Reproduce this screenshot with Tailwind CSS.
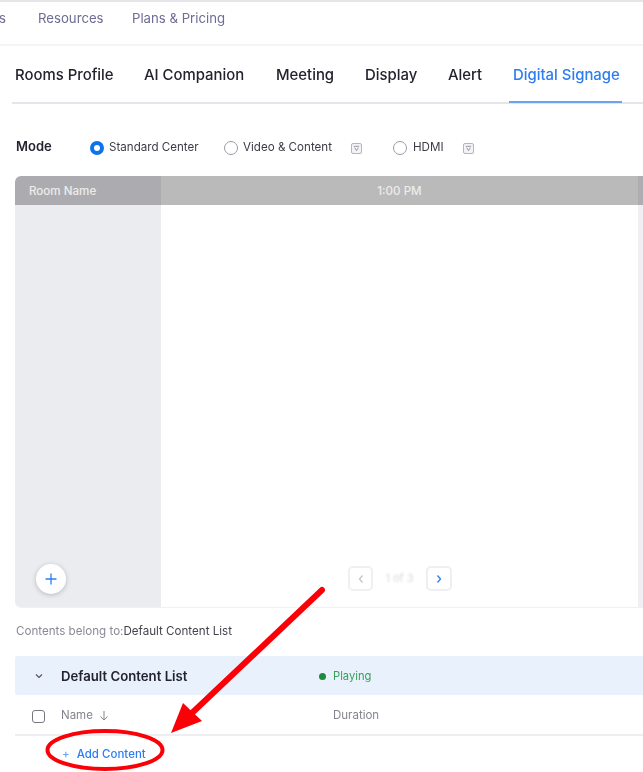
<!DOCTYPE html>
<html lang="en">
<head>
  <meta charset="UTF-8" />
  <title>Digital Signage</title>
  <script src="https://cdn.jsdelivr.net/npm/@tailwindcss/browser@4"></script>
</head>
<body class="bg-white font-['Inter',sans-serif] text-[#23232f]">
  <div class="relative w-[643px] h-[772px] overflow-hidden">
    <div class="blur-[0.5px]">
      <!-- top nav -->
      <div class="h-[46px] border-t-2 border-b-2 border-t-[#e6e6e9] border-b-[#f5f5f6] flex items-center text-[13.2px] text-[#6e6c92] pb-[8px]">
        <span class="w-[39px] -ml-[1px]">s</span>
        <span class="w-[94px]">Resources</span>
        <span>Plans &amp; Pricing</span>
      </div>

      <!-- tabs -->
      <div class="ml-[12px] h-[58px] border-b-2 border-[#e4e6ec] flex items-center text-[14.9px] font-medium pl-[3px] pt-[3px]">
        <span class="w-[129px]">Rooms Profile</span>
        <span class="w-[132px]">AI Companion</span>
        <span class="w-[89px]">Meeting</span>
        <span class="w-[83px]">Display</span>
        <span class="w-[65px]">Alert</span>
        <span class="relative text-[#2d7df0]">Digital Signage
          <span class="absolute left-[-4px] w-[113px] top-[37px] h-[2px] bg-[#6ba3f2]"></span>
        </span>
      </div>

      <!-- mode -->
      <div class="flex items-center h-[72px] pl-[16px] pt-[16px] text-[11.6px] text-[#3c3c48]">
        <span class="w-[74px] text-[13px] font-semibold text-[#23232f] -mt-[3px]">Mode</span>
        <span class="w-[14px] h-[14px] rounded-full border-[4px] border-[#0e72ed] mr-[5px]"></span>
        <span class="w-[115px]">Standard Center</span>
        <span class="w-[14px] h-[14px] rounded-full border-[1.5px] border-[#9a9aa6] mr-[5px]"></span>
        <span class="w-[108px]">Video &amp; Content</span>
        <span class="w-[11px] h-[11px] rounded-[2px] border border-[#b4b4bc] bg-[#f3f3f5] flex items-center justify-center mr-[31px]">
          <svg class="w-[7px] h-[7px]" viewBox="0 0 8 8" fill="none" stroke="#8e8e99" stroke-width="1"><path d="M1 1.5h6M2 3l2 3.5L6 3"/></svg>
        </span>
        <span class="w-[14px] h-[14px] rounded-full border-[1.5px] border-[#9a9aa6] mr-[6px]"></span>
        <span class="w-[50px]">HDMI</span>
        <span class="w-[11px] h-[11px] rounded-[2px] border border-[#b4b4bc] bg-[#f3f3f5] flex items-center justify-center">
          <svg class="w-[7px] h-[7px]" viewBox="0 0 8 8" fill="none" stroke="#8e8e99" stroke-width="1"><path d="M1 1.5h6M2 3l2 3.5L6 3"/></svg>
        </span>
      </div>

      <!-- schedule preview -->
      <div class="ml-[15px] h-[432px] flex flex-col rounded-tl-[6px] rounded-bl-[6px] overflow-hidden border-b border-[#f1f1f4]">
        <div class="h-[29px] shrink-0 flex bg-[#bababa] text-[11.6px] text-[#ececec] font-medium">
          <div class="w-[146px] bg-[#acacb0] pl-[14px] pt-[2px] flex items-center">Room Name</div>
          <div class="w-[477px] pt-[2px] flex items-center justify-center">1:00 PM</div>
          <div class="flex-1 bg-[#aeaeb2]"></div>
        </div>
        <div class="flex-1 flex">
          <div class="w-[146px] bg-[#ebecf0] flex items-end pl-[21px] pb-[13px]">
            <div class="w-[30px] h-[30px] rounded-full bg-white shadow-[0_1px_5px_rgba(0,0,0,0.22)] flex items-center justify-center">
              <svg class="w-[12px] h-[12px]" viewBox="0 0 12 12" stroke="#2d7df0" stroke-width="1.3" stroke-linecap="round"><path d="M6 1v10M1 6h10"/></svg>
            </div>
          </div>
          <div class="w-[477px] flex items-end pb-[16px] pl-[187px] gap-[12px]">
            <div class="w-[25px] h-[25px] rounded-[5px] border-2 border-[#f0f0f4] flex items-center justify-center">
              <svg class="w-[8px] h-[10px]" viewBox="0 0 8 10" fill="none" stroke="#c4c4ca" stroke-width="1.3"><path d="M5.5 1.5 2.5 5l3 3.5"/></svg>
            </div>
            <span class="w-[29px] h-[25px] flex items-center justify-center text-[11px] text-[#d9d9dd] blur-[1px] whitespace-nowrap">1 of 3</span>
            <div class="w-[26px] h-[25px] rounded-[5px] border-2 border-[#eeeef3] flex items-center justify-center">
              <svg class="w-[8px] h-[10px]" viewBox="0 0 8 10" fill="none" stroke="#2d7df0" stroke-width="1.3"><path d="M2.5 1.5 5.5 5l-3 3.5"/></svg>
            </div>
          </div>
          <div class="flex-1 bg-[#f0f0f4]"></div>
        </div>
      </div>

      <!-- content list -->
      <div class="pl-[16px] h-[48px] flex items-center text-[11.6px] text-[#8a8a96]">
        Contents belong to:<span class="text-[#44444f]">Default Content List</span>
      </div>
      <div class="ml-[15px] h-[39px] bg-[#e9f2fc] flex items-center rounded-l-[2px]">
        <svg class="w-[8px] h-[6px] ml-[20px] mr-[18px]" viewBox="0 0 8 6" fill="none" stroke="#55555f" stroke-width="1.2"><path d="M1 1.5 4 4.5l3-3"/></svg>
        <span class="w-[258px] pt-[2px] text-[13.2px] font-semibold text-[#23232f]">Default Content List</span>
        <span class="w-[7px] h-[7px] rounded-full bg-[#1f8a3f] mr-[7px] mt-[2px]"></span>
        <span class="pt-[2px] text-[11.2px] text-[#37a05a]">Playing</span>
      </div>
      <div class="ml-[15px] h-[41px] border-b-2 border-[#eeeef2] flex items-center pt-[3px] text-[11.5px] text-[#85858f]">
        <span class="w-[13px] h-[13px] rounded-[3px] border border-[#77777f] ml-[17px] mr-[16px]"></span>
        <span class="w-[38px]">Name</span>
        <svg class="w-[10px] h-[11px] -mt-[1px]" viewBox="0 0 10 11" fill="none" stroke="#85858f" stroke-width="1"><path d="M5 1v9M1.5 6.5 5 10l3.5-3.5"/></svg>
        <span class="ml-[224px]">Duration</span>
      </div>
      <div class="flex items-center h-[36px] pl-[62px] pt-[2px] text-[11.5px] font-medium text-[#2d7df0]">
        <span class="mr-[7px] text-[#6ba3f2]">+</span>Add Content
      </div>
    </div>

    <!-- red annotation -->
    <svg class="absolute left-0 top-0" width="643" height="772" viewBox="0 0 643 772" fill="none">
      <path d="M322 590 192 713" stroke="#fb0007" stroke-width="6" stroke-linecap="round"/>
      <path d="M183 703 202 721 171 733Z" fill="#fb0007"/>
      <ellipse cx="105" cy="750" rx="57.5" ry="19" stroke="#fb0007" stroke-width="4"/>
    </svg>
  </div>
</body>
</html>
